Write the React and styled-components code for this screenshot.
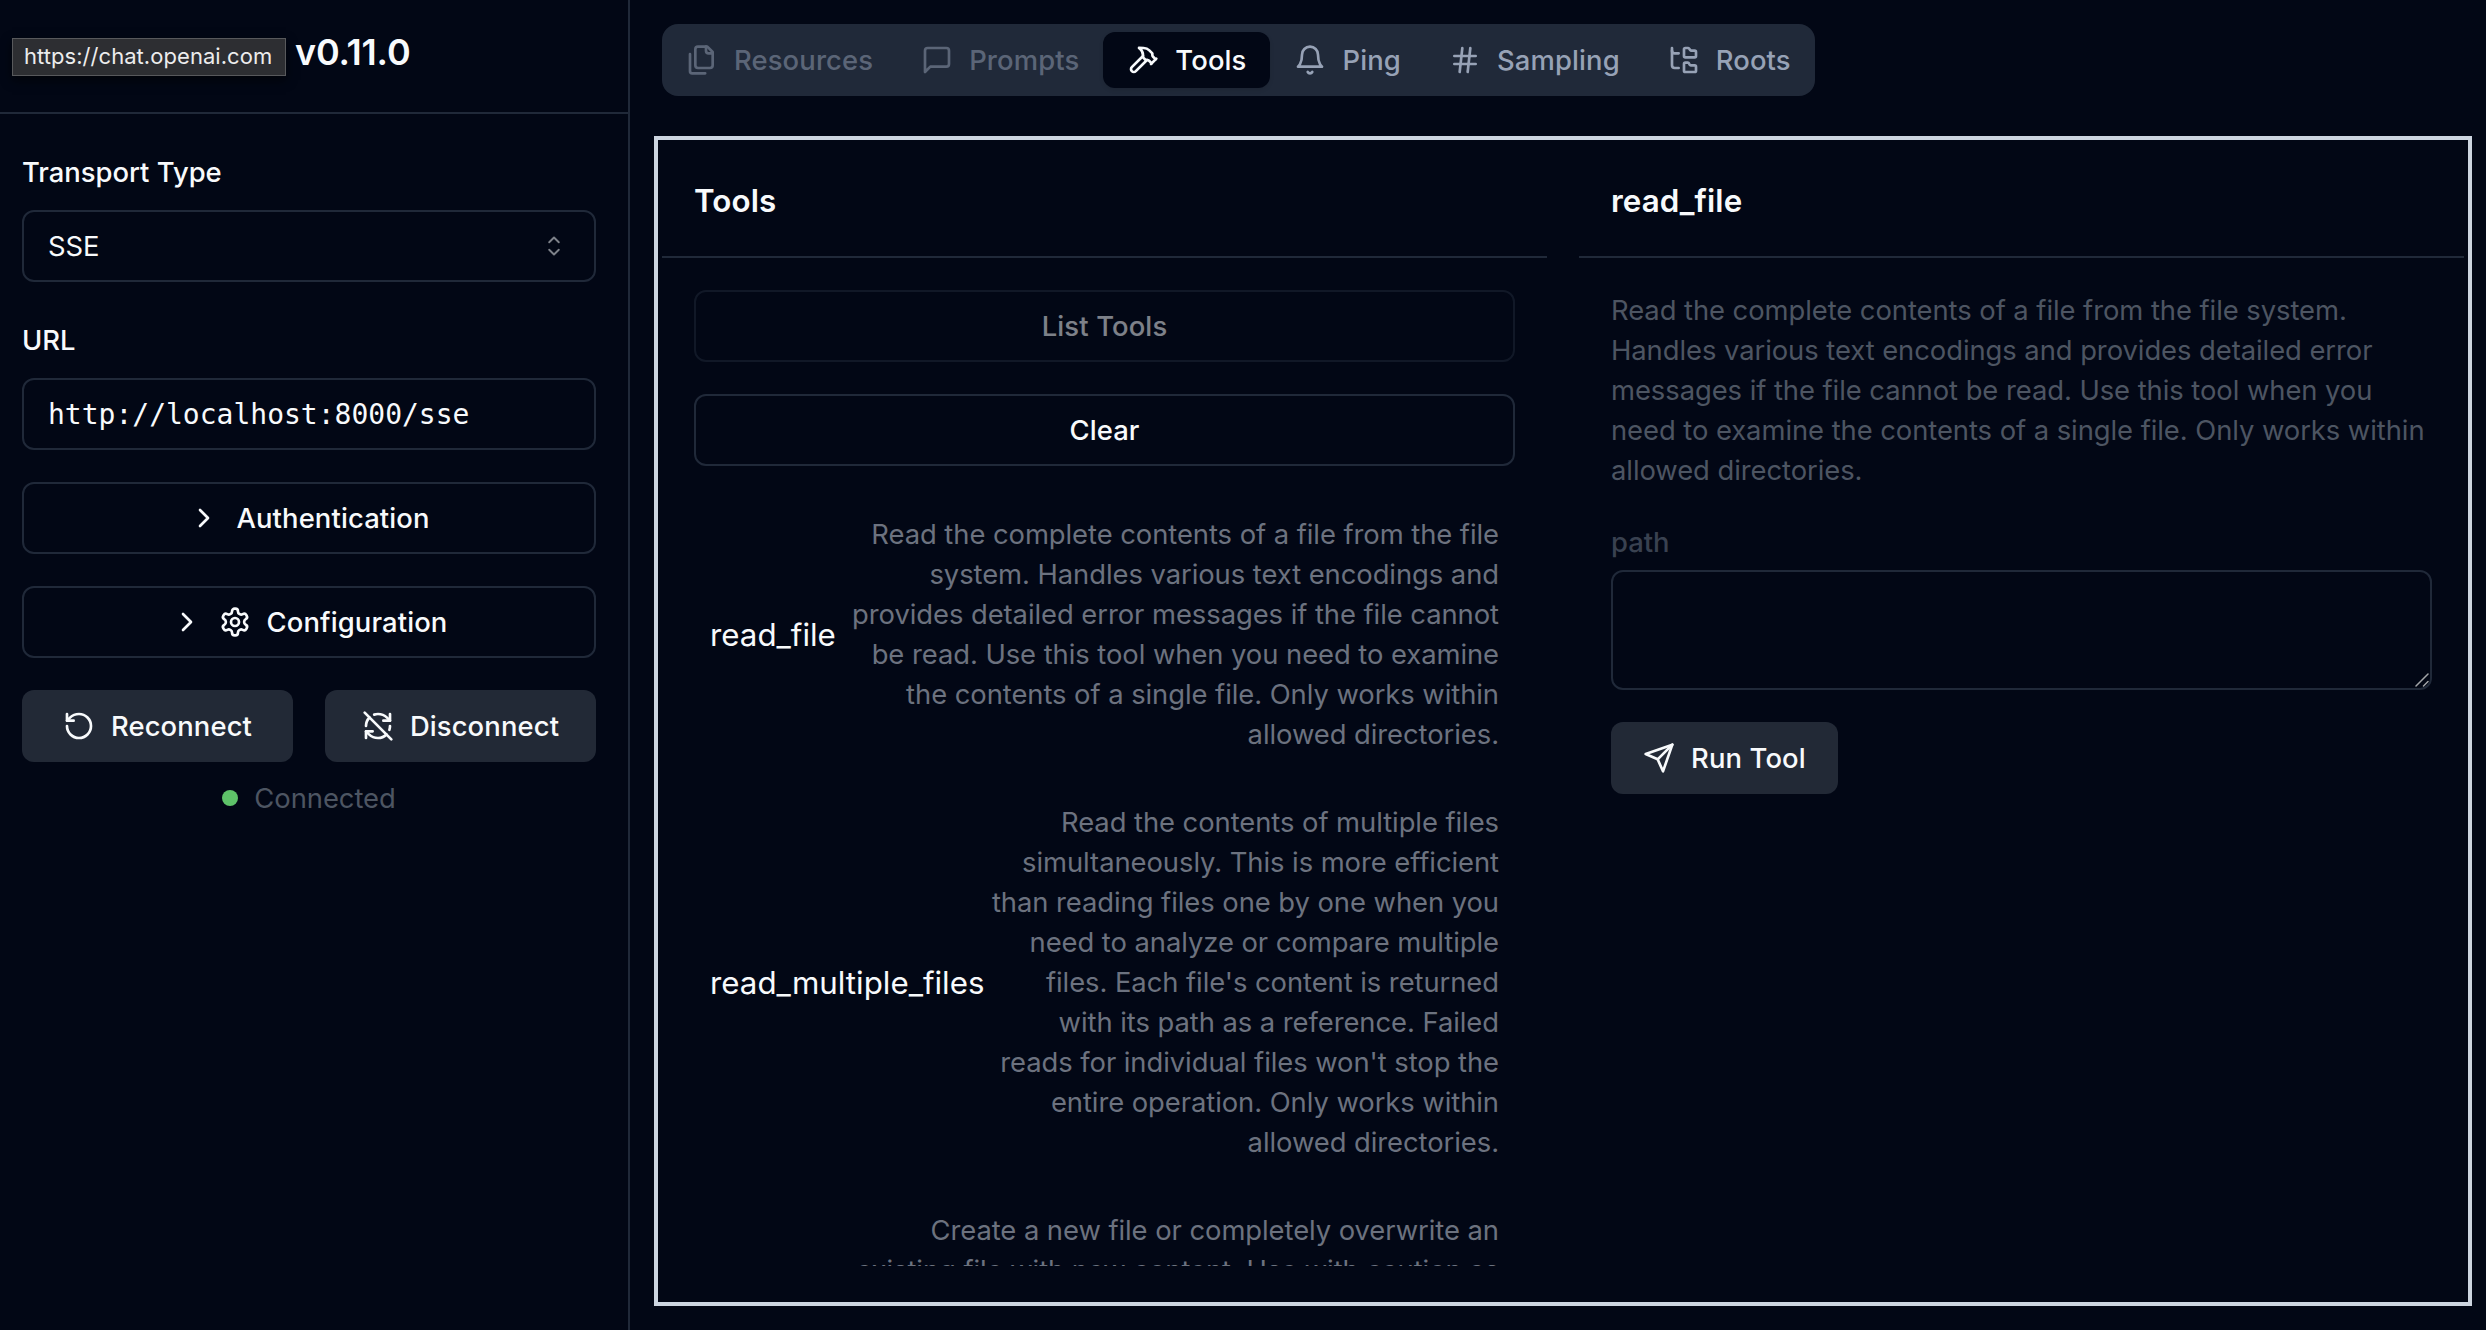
import React from "react";
import styled, { createGlobalStyle, css } from "styled-components";
import { ChevronRight, Hash, RefreshCwOff, RotateCcw } from "lucide-react";

const GlobalStyle = createGlobalStyle`
  *, *::before, *::after { box-sizing: border-box; }
  body {
    margin: 0;
    background: #020715;
    color: #f8fafc;
    font-family: Inter, "Liberation Sans", sans-serif;
    font-size: 31.3px;
    line-height: 48px;
    overflow: hidden;
    -webkit-font-smoothing: antialiased;
  }
  button, textarea, input { font: inherit; color: inherit; margin: 0; }
  h1, h3, p { margin: 0; }
`;

const border = "#202939";

const bodyText = css`
  font-size: 27.4px;
  letter-spacing: -0.06px;
  line-height: 40px;
`;

const mediumText = css`
  font-size: 27.4px;
  font-weight: 500;
  letter-spacing: 0.13px;
  line-height: 40px;
`;

const Shell = styled.div`
  display: flex;
  width: 2486px;
  height: 1330px;
  overflow: hidden;
`;

const Sidebar = styled.aside`
  display: flex;
  flex-direction: column;
  flex: none;
  width: 630px;
  border-right: 2px solid ${border};
`;

const SidebarHeader = styled.header`
  position: relative;
  display: flex;
  align-items: center;
  height: 114px;
  padding: 0 32px 8px 295px;
  border-bottom: 2px solid ${border};
`;

const Version = styled.h1`
  font-size: 36px;
  font-weight: 600;
  line-height: 56px;
  letter-spacing: -0.2px;
`;

const LinkTip = styled.div`
  position: absolute;
  left: 12px;
  top: 38px;
  width: 274px;
  height: 38px;
  padding-left: 11px;
  border: 1px solid #58595c;
  background: #2d2e32;
  color: #ececed;
  font-size: 22px;
  letter-spacing: 0.05px;
  line-height: 35px;
  white-space: nowrap;
  box-shadow: 0 4px 10px rgba(0, 0, 0, 0.6);
`;

const SidebarBody = styled.div`
  display: flex;
  flex-direction: column;
  gap: 32px;
  padding: 32px 32px 0 22px;
`;

const Field = styled.div`
  display: flex;
  flex-direction: column;
  gap: 18px;
  padding-top: 6px;
`;

const Label = styled.label`
  ${mediumText}
  letter-spacing: 0;
`;

const controlBox = css`
  display: flex;
  align-items: center;
  height: 72px;
  border: 2px solid ${border};
  border-radius: 12px;
  background: transparent;
`;

const SelectTrigger = styled.button`
  ${controlBox}
  ${bodyText}
  justify-content: space-between;
  padding: 0 24px;
`;

const UrlInput = styled.input`
  ${controlBox}
  width: 100%;
  padding: 0 24px;
  font-family: "DejaVu Sans Mono", "Liberation Mono", monospace;
  font-size: 28px;
`;

const Button = styled.button`
  ${controlBox}
  ${mediumText}
  justify-content: center;
  gap: 16px;
  padding: 0 32px;
  white-space: nowrap;
  ${(p) => p.$solid && css`
    background: #222936;
    border: 0;
  `}
  ${(p) => p.$dim && css`opacity: 0.5;`}
  ${(p) => p.$start && css`align-self: flex-start;`}
`;

const ButtonPair = styled.div`
  display: grid;
  grid-template-columns: 1fr 1fr;
  gap: 32px;
  ${Button} { padding: 0; }
`;

const Status = styled.div`
  ${bodyText}
  display: flex;
  align-items: center;
  justify-content: center;
  gap: 16px;
  margin-top: -16px;
  color: #4d5562;
`;

const StatusDot = styled.span`
  width: 16px;
  height: 16px;
  border-radius: 50%;
  background: #5ec269;
`;

const Main = styled.main`
  display: flex;
  flex-direction: column;
  flex: 1;
  min-width: 0;
  padding: 24px 14px 24px 24px;
`;

const TabList = styled.nav`
  display: flex;
  align-items: center;
  align-self: flex-start;
  height: 72px;
  margin-left: 8px;
  border-radius: 16px;
  background: ${border};
`;

const Tab = styled.button`
  ${mediumText}
  display: flex;
  align-items: center;
  gap: 16px;
  height: 56px;
  padding: 0 24px;
  border: 0;
  border-radius: 12px;
  background: ${(p) => (p.$active ? "#020715" : "transparent")};
  color: ${(p) => (p.$active ? "#f8fafc" : "#97a2b6")};
  opacity: ${(p) => (p.$disabled ? 0.5 : 1)};
  box-shadow: ${(p) => (p.$active ? "0 2px 4px rgba(0, 0, 0, 0.1)" : "none")};
`;

const Panel = styled.section`
  display: grid;
  grid-template-columns: 1fr 1fr;
  gap: 32px;
  height: 1170px;
  margin-top: 40px;
  padding: 4px;
  border: 4px solid #cdd5e0;
`;

const Column = styled.div`
  display: flex;
  flex-direction: column;
  min-width: 0;
  min-height: 0;
`;

const ColumnHeader = styled.header`
  padding: 32px;
  border-bottom: 2px solid ${border};
`;

const ColumnTitle = styled.h3`
  padding-top: 2px;
  font-size: 31.3px;
  font-weight: 600;
  letter-spacing: 0.1px;
  line-height: 46px;
`;

const ColumnBody = styled.div`
  display: flex;
  flex-direction: column;
  gap: 32px;
  flex: 1;
  min-height: 0;
  padding: 32px;
`;

const ToolList = styled.div`
  display: flex;
  flex-direction: column;
  gap: 16px;
  flex: 1;
  min-height: 0;
  overflow: hidden;
`;

const ToolItem = styled.div`
  display: flex;
  align-items: center;
  justify-content: space-between;
  flex: none;
  padding: 16px;
`;

const ToolName = styled.span`
  padding-top: 2px;
`;

const ToolSummary = styled.span`
  ${bodyText}
  color: #6c727f;
  text-align: right;
`;

const ToolDescription = styled.p`
  ${bodyText}
  color: #4d5562;
`;

const ParamField = styled.div`
  display: flex;
  flex-direction: column;
  gap: 8px;
`;

const ParamLabel = styled(Label)`
  color: #394150;
`;

const TextareaWrap = styled.div`
  position: relative;
  height: 120px;
`;

const Textarea = styled.textarea`
  display: block;
  width: 100%;
  height: 120px;
  padding: 16px 24px;
  border: 2px solid ${border};
  border-radius: 12px;
  background: transparent;
  resize: none;
`;

const Grip = styled.svg`
  position: absolute;
  right: 3px;
  bottom: 3px;
`;

const IconSvg = styled.svg`
  flex: none;
  width: 32px;
  height: 32px;
  fill: none;
  stroke: currentColor;
  stroke-width: 2;
  stroke-linecap: round;
  stroke-linejoin: round;
`;

const iconPaths = {
  files: [
    "M20 7h-3a2 2 0 0 1-2-2V2",
    "M9 18a2 2 0 0 1-2-2V4a2 2 0 0 1 2-2h7l4 4v10a2 2 0 0 1-2 2Z",
    "M3 7.6v12.8A1.6 1.6 0 0 0 4.6 22h9.8",
  ],
  message: ["M21 15a2 2 0 0 1-2 2H7l-4 4V5a2 2 0 0 1 2-2h14a2 2 0 0 1 2 2z"],
  hammer: [
    "m15 12-8.373 8.373a1 1 0 1 1-3-3L12 9",
    "m18 15 4-4",
    "m21.5 11.5-1.914-1.914A2 2 0 0 1 19 8.172V7l-2.26-2.26a6 6 0 0 0-4.202-1.756L9 2.96l.92.82A6.18 6.18 0 0 1 12 8.4V10l2 2h1.172a2 2 0 0 1 1.414.586L18.5 14.5",
  ],
  bell: ["M6 8a6 6 0 0 1 12 0c0 7 3 9 3 9H3s3-2 3-9", "M10.3 21a1.94 1.94 0 0 0 3.4 0"],
  tree: [
    "M20 10a1 1 0 0 0 1-1V6a1 1 0 0 0-1-1h-2.5a1 1 0 0 1-.8-.4l-.9-1.2A1 1 0 0 0 15 3h-2a1 1 0 0 0-1 1v5a1 1 0 0 0 1 1Z",
    "M20 21a1 1 0 0 0 1-1v-3a1 1 0 0 0-1-1h-2.9a1 1 0 0 1-.88-.55l-.42-.85a1 1 0 0 0-.92-.6H13a1 1 0 0 0-1 1v5a1 1 0 0 0 1 1Z",
    "M3 5a2 2 0 0 0 2 2h3",
    "M3 3v13a2 2 0 0 0 2 2h3",
  ],
  gear: [
    "M12.22 2h-.44a2 2 0 0 0-2 2v.18a2 2 0 0 1-1 1.73l-.43.25a2 2 0 0 1-2 0l-.15-.08a2 2 0 0 0-2.73.73l-.22.38a2 2 0 0 0 .73 2.73l.15.1a2 2 0 0 1 1 1.72v.51a2 2 0 0 1-1 1.74l-.15.09a2 2 0 0 0-.73 2.73l.22.38a2 2 0 0 0 2.73.73l.15-.08a2 2 0 0 1 2 0l.43.25a2 2 0 0 1 1 1.73V20a2 2 0 0 0 2 2h.44a2 2 0 0 0 2-2v-.18a2 2 0 0 1 1-1.73l.43-.25a2 2 0 0 1 2 0l.15.08a2 2 0 0 0 2.73-.73l.22-.39a2 2 0 0 0-.73-2.73l-.15-.08a2 2 0 0 1-1-1.74v-.5a2 2 0 0 1 1-1.74l.15-.09a2 2 0 0 0 .73-2.73l-.22-.38a2 2 0 0 0-2.73-.73l-.15.08a2 2 0 0 1-2 0l-.43-.25a2 2 0 0 1-1-1.73V4a2 2 0 0 0-2-2z",
    "M15 12a3 3 0 1 1-6 0a3 3 0 1 1 6 0z",
  ],
  send: ["m22 2-7 20-4-9-9-4Z", "M22 2 11 13"],
};

const Icon = ({ name }) => (
  <IconSvg viewBox="0 0 24 24" aria-hidden="true">
    {iconPaths[name].map((d) => (
      <path key={d} d={d} />
    ))}
  </IconSvg>
);

const CaretSort = () => (
  <svg width="32" height="32" viewBox="0 0 15 15" fill="none" stroke="currentColor" strokeWidth="0.9" strokeLinecap="round" strokeLinejoin="round" opacity="0.5">
    <path d="M5.25 5.75 7.5 3.5l2.25 2.25M5.25 9.25 7.5 11.5l2.25-2.25" />
  </svg>
);

const tabs = [
  { label: "Resources", icon: <Icon name="files" />, disabled: true },
  { label: "Prompts", icon: <Icon name="message" />, disabled: true },
  { label: "Tools", icon: <Icon name="hammer" />, active: true },
  { label: "Ping", icon: <Icon name="bell" /> },
  { label: "Sampling", icon: <Hash size={32} /> },
  { label: "Roots", icon: <Icon name="tree" /> },
];

const readFile =
  "Read the complete contents of a file from the file system. Handles various text encodings and provides detailed error messages if the file cannot be read. Use this tool when you need to examine the contents of a single file. Only works within allowed directories.";

const tools = [
  { name: "read_file", description: readFile },
  {
    name: "read_multiple_files",
    description:
      "Read the contents of multiple files simultaneously. This is more efficient than reading files one by one when you need to analyze or compare multiple files. Each file's content is returned with its path as a reference. Failed reads for individual files won't stop the entire operation. Only works within allowed directories.",
  },
  {
    name: "write_file",
    description:
      "Create a new file or completely overwrite an existing file with new content. Use with caution as it will overwrite existing files without warning. Handles text content with proper encoding. Only works within allowed directories.",
  },
];

export default function App() {
  return (
    <>
      <GlobalStyle />
      <Shell>
        <Sidebar>
          <SidebarHeader>
            <Version>v0.11.0</Version>
            <LinkTip>https://chat.openai.com</LinkTip>
          </SidebarHeader>
          <SidebarBody>
            <Field>
              <Label>Transport Type</Label>
              <SelectTrigger>
                <span>SSE</span>
                <CaretSort />
              </SelectTrigger>
            </Field>
            <Field>
              <Label>URL</Label>
              <UrlInput defaultValue="http://localhost:8000/sse" spellCheck={false} />
            </Field>
            <Button>
              <ChevronRight size={32} />
              Authentication
            </Button>
            <Button>
              <ChevronRight size={32} />
              <Icon name="gear" />
              Configuration
            </Button>
            <ButtonPair>
              <Button $solid>
                <RotateCcw size={32} />
                Reconnect
              </Button>
              <Button $solid>
                <RefreshCwOff size={32} />
                Disconnect
              </Button>
            </ButtonPair>
            <Status>
              <StatusDot />
              Connected
            </Status>
          </SidebarBody>
        </Sidebar>
        <Main>
          <TabList>
            {tabs.map((t) => (
              <Tab key={t.label} $active={t.active} $disabled={t.disabled}>
                {t.icon}
                {t.label}
              </Tab>
            ))}
          </TabList>
          <Panel>
            <Column>
              <ColumnHeader>
                <ColumnTitle>Tools</ColumnTitle>
              </ColumnHeader>
              <ColumnBody>
                <Button $dim>List Tools</Button>
                <Button>Clear</Button>
                <ToolList>
                  {tools.map((t) => (
                    <ToolItem key={t.name}>
                      <ToolName>{t.name}</ToolName>
                      <ToolSummary>{t.description}</ToolSummary>
                    </ToolItem>
                  ))}
                </ToolList>
              </ColumnBody>
            </Column>
            <Column>
              <ColumnHeader>
                <ColumnTitle>read_file</ColumnTitle>
              </ColumnHeader>
              <ColumnBody>
                <ToolDescription>{readFile}</ToolDescription>
                <ParamField>
                  <ParamLabel>path</ParamLabel>
                  <TextareaWrap>
                    <Textarea />
                    <Grip width="14" height="14" viewBox="0 0 14 14" stroke="#a3a5a8" strokeWidth="1.5" strokeLinecap="round">
                      <path d="M1 13 13 1M8.5 13 13 8.5" />
                    </Grip>
                  </TextareaWrap>
                </ParamField>
                <Button $solid $start>
                  <Icon name="send" />
                  Run Tool
                </Button>
              </ColumnBody>
            </Column>
          </Panel>
        </Main>
      </Shell>
    </>
  );
}
